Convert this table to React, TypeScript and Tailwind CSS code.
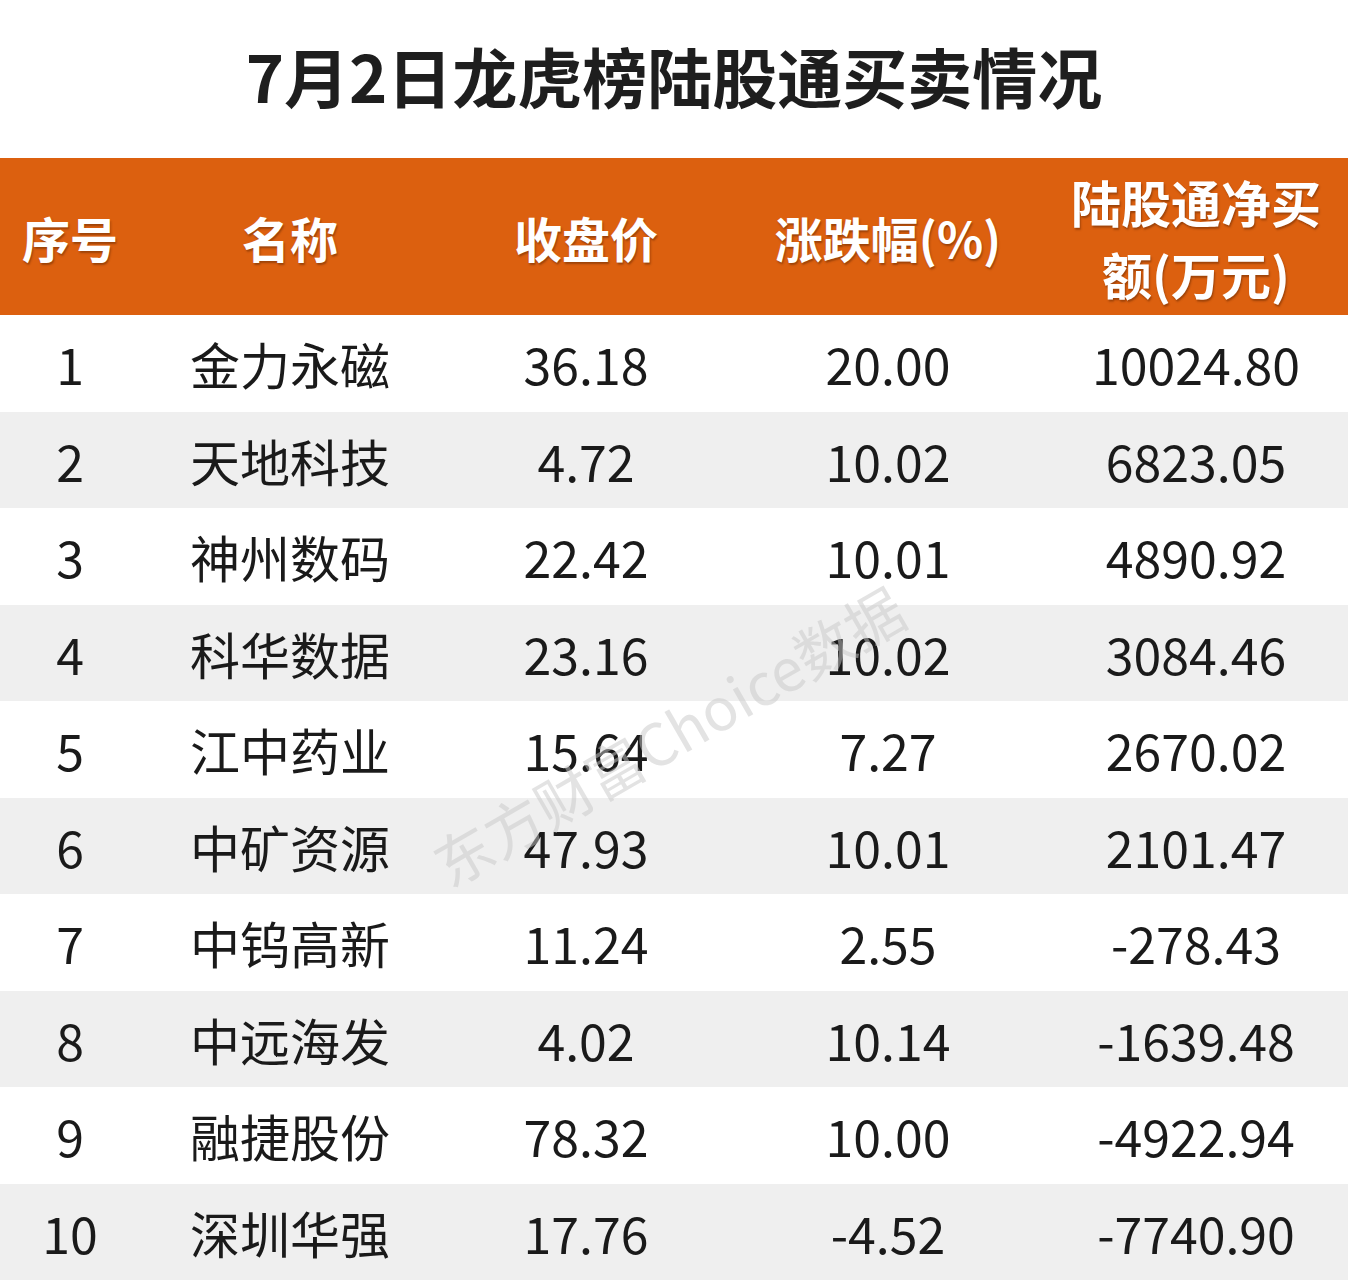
const rows: [string, string, string, string, string][] = [
  ["1", "金力永磁", "36.18", "20.00", "10024.80"],
  ["2", "天地科技", "4.72", "10.02", "6823.05"],
  ["3", "神州数码", "22.42", "10.01", "4890.92"],
  ["4", "科华数据", "23.16", "10.02", "3084.46"],
  ["5", "江中药业", "15.64", "7.27", "2670.02"],
  ["6", "中矿资源", "47.93", "10.01", "2101.47"],
  ["7", "中钨高新", "11.24", "2.55", "-278.43"],
  ["8", "中远海发", "4.02", "10.14", "-1639.48"],
  ["9", "融捷股份", "78.32", "10.00", "-4922.94"],
  ["10", "深圳华强", "17.76", "-4.52", "-7740.90"],
];

const cols = "grid grid-cols-[140px_300px_292px_312px_304px]";

const App = () => {
  return (
    <div className="relative w-[1348px] h-[1280px] overflow-hidden bg-white font-['Noto_Sans_CJK_SC','Noto_Sans',sans-serif] text-[#1a1a1a]">
      <div className="h-[158px] flex items-center justify-center pb-[8px]">
        <h1 className="text-[65px] font-bold text-[#1e1e1e] leading-none">
          7月2日龙虎榜陆股通买卖情况
        </h1>
      </div>

      <div
        className={`${cols} h-[157px] bg-[#dc600f] text-white font-bold text-[48px] leading-none items-center text-center [text-shadow:1px_2px_2px_rgba(80,30,0,0.45)]`}
      >
        <div>序号</div>
        <div>名称</div>
        <div>收盘价</div>
        <div>涨跌幅(%)</div>
        <div className="flex flex-col items-center gap-[22px] text-[50px]">
          <span>陆股通净买</span>
          <span>额(万元)</span>
        </div>
      </div>

      <div>
        {rows.map((r, i) => (
          <div
            key={r[0]}
            className={`${cols} h-[96.5px] items-center text-center text-[50px] leading-none ${
              i % 2 === 1 ? "bg-[#efefef]" : "bg-white"
            }`}
          >
            <div>{r[0]}</div>
            <div>{r[1]}</div>
            <div>{r[2]}</div>
            <div>{r[3]}</div>
            <div>{r[4]}</div>
          </div>
        ))}
      </div>

      {/* watermark */}
      <div className="absolute left-[668px] top-[735px] -translate-x-1/2 -translate-y-1/2 -rotate-[30deg] whitespace-nowrap text-[58px] text-[#c8c8c8] opacity-50 pointer-events-none">
        东方财富Choice数据
      </div>
    </div>
  );
};

export default App;
